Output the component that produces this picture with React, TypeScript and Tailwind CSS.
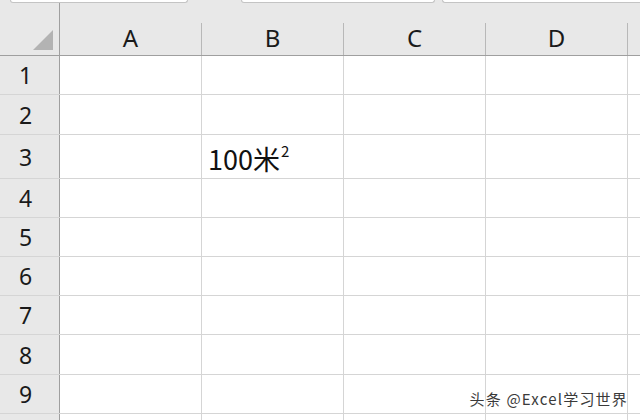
import React from 'react';

const cols = ['A', 'B', 'C', 'D', ''];
const rows = [
  { n: '1', h: 'h-[39px]' },
  { n: '2', h: 'h-[40px]' },
  { n: '3', h: 'h-[44px]' },
  { n: '4', h: 'h-[39px]' },
  { n: '5', h: 'h-[39px]' },
  { n: '6', h: 'h-[39px]' },
  { n: '7', h: 'h-[39px]' },
  { n: '8', h: 'h-[40px]' },
  { n: '9', h: 'h-[39px]' },
  { n: '', h: 'h-[39px]' },
];

export default function App() {
  return (
    <div className="relative h-[420px] w-[640px] overflow-hidden bg-white font-['Noto_Sans',sans-serif] text-[#1a1a1a]">
      {/* header strip */}
      <div className="flex h-[56px] flex-col border-b border-[#9f9f9f] bg-[#e8e8e8]">
        <div className="flex h-[3px] shrink-0">
          <div className="ml-[10px] w-[180px] rounded-b-sm border-x border-b border-[#c4c4c4] bg-white" />
          <div className="ml-[53px] w-[195px] rounded-b-sm border-x border-b border-[#c4c4c4] bg-white" />
          <div className="ml-[7px] w-[200px] rounded-bl-sm border-l border-b border-[#c4c4c4] bg-white" />
        </div>
        <div className="flex flex-1">
          <div className="flex w-[60px] shrink-0 items-end justify-end border-r border-[#9f9f9f] pb-[5px] pr-[6px]">
            <div className="h-0 w-0 border-b-[20px] border-l-[20px] border-b-[#b3b3b3] border-l-transparent" />
          </div>
          {cols.map((c, i) => (
            <div key={i} className="flex w-[142px] shrink-0 flex-col">
              <div className="h-[20px]" />
              <div className="flex flex-1 items-center justify-center border-r border-[#b8b8b8] pb-[2px] text-[24px] leading-none">
                {c}
              </div>
            </div>
          ))}
        </div>
      </div>

      {/* body */}
      {rows.map((r, ri) => (
        <div key={ri} className={`flex ${r.h} border-b border-[#d5d5d5]`}>
          <div className="flex w-[60px] shrink-0 items-center justify-center border-r border-[#9f9f9f] bg-[#e8e8e8] pr-[8px] text-[23px] leading-none">
            <span className="-mb-[1px]">{r.n}</span>
          </div>
          {cols.map((c, i) => (
            <div key={i} className="flex w-[142px] shrink-0 items-end border-r border-[#d5d5d5] pb-[6px] pl-[6px]">
              {r.n === '3' && c === 'B' ? (
                <span className="font-['Noto_Sans_CJK_SC',sans-serif] text-[27px] leading-none text-[#111]">
                  100米<sup className="top-[-13px] ml-[1px] text-[15px]">2</sup>
                </span>
              ) : null}
            </div>
          ))}
        </div>
      ))}

      <div className="absolute bottom-[14px] right-[12px] font-['Noto_Sans_CJK_SC',sans-serif] text-[15px] leading-none tracking-[1.2px] text-[#3a3a3a] [text-shadow:0_0_2px_#fff,0_0_2px_#fff]">
        头条 @Excel学习世界
      </div>
    </div>
  );
}
